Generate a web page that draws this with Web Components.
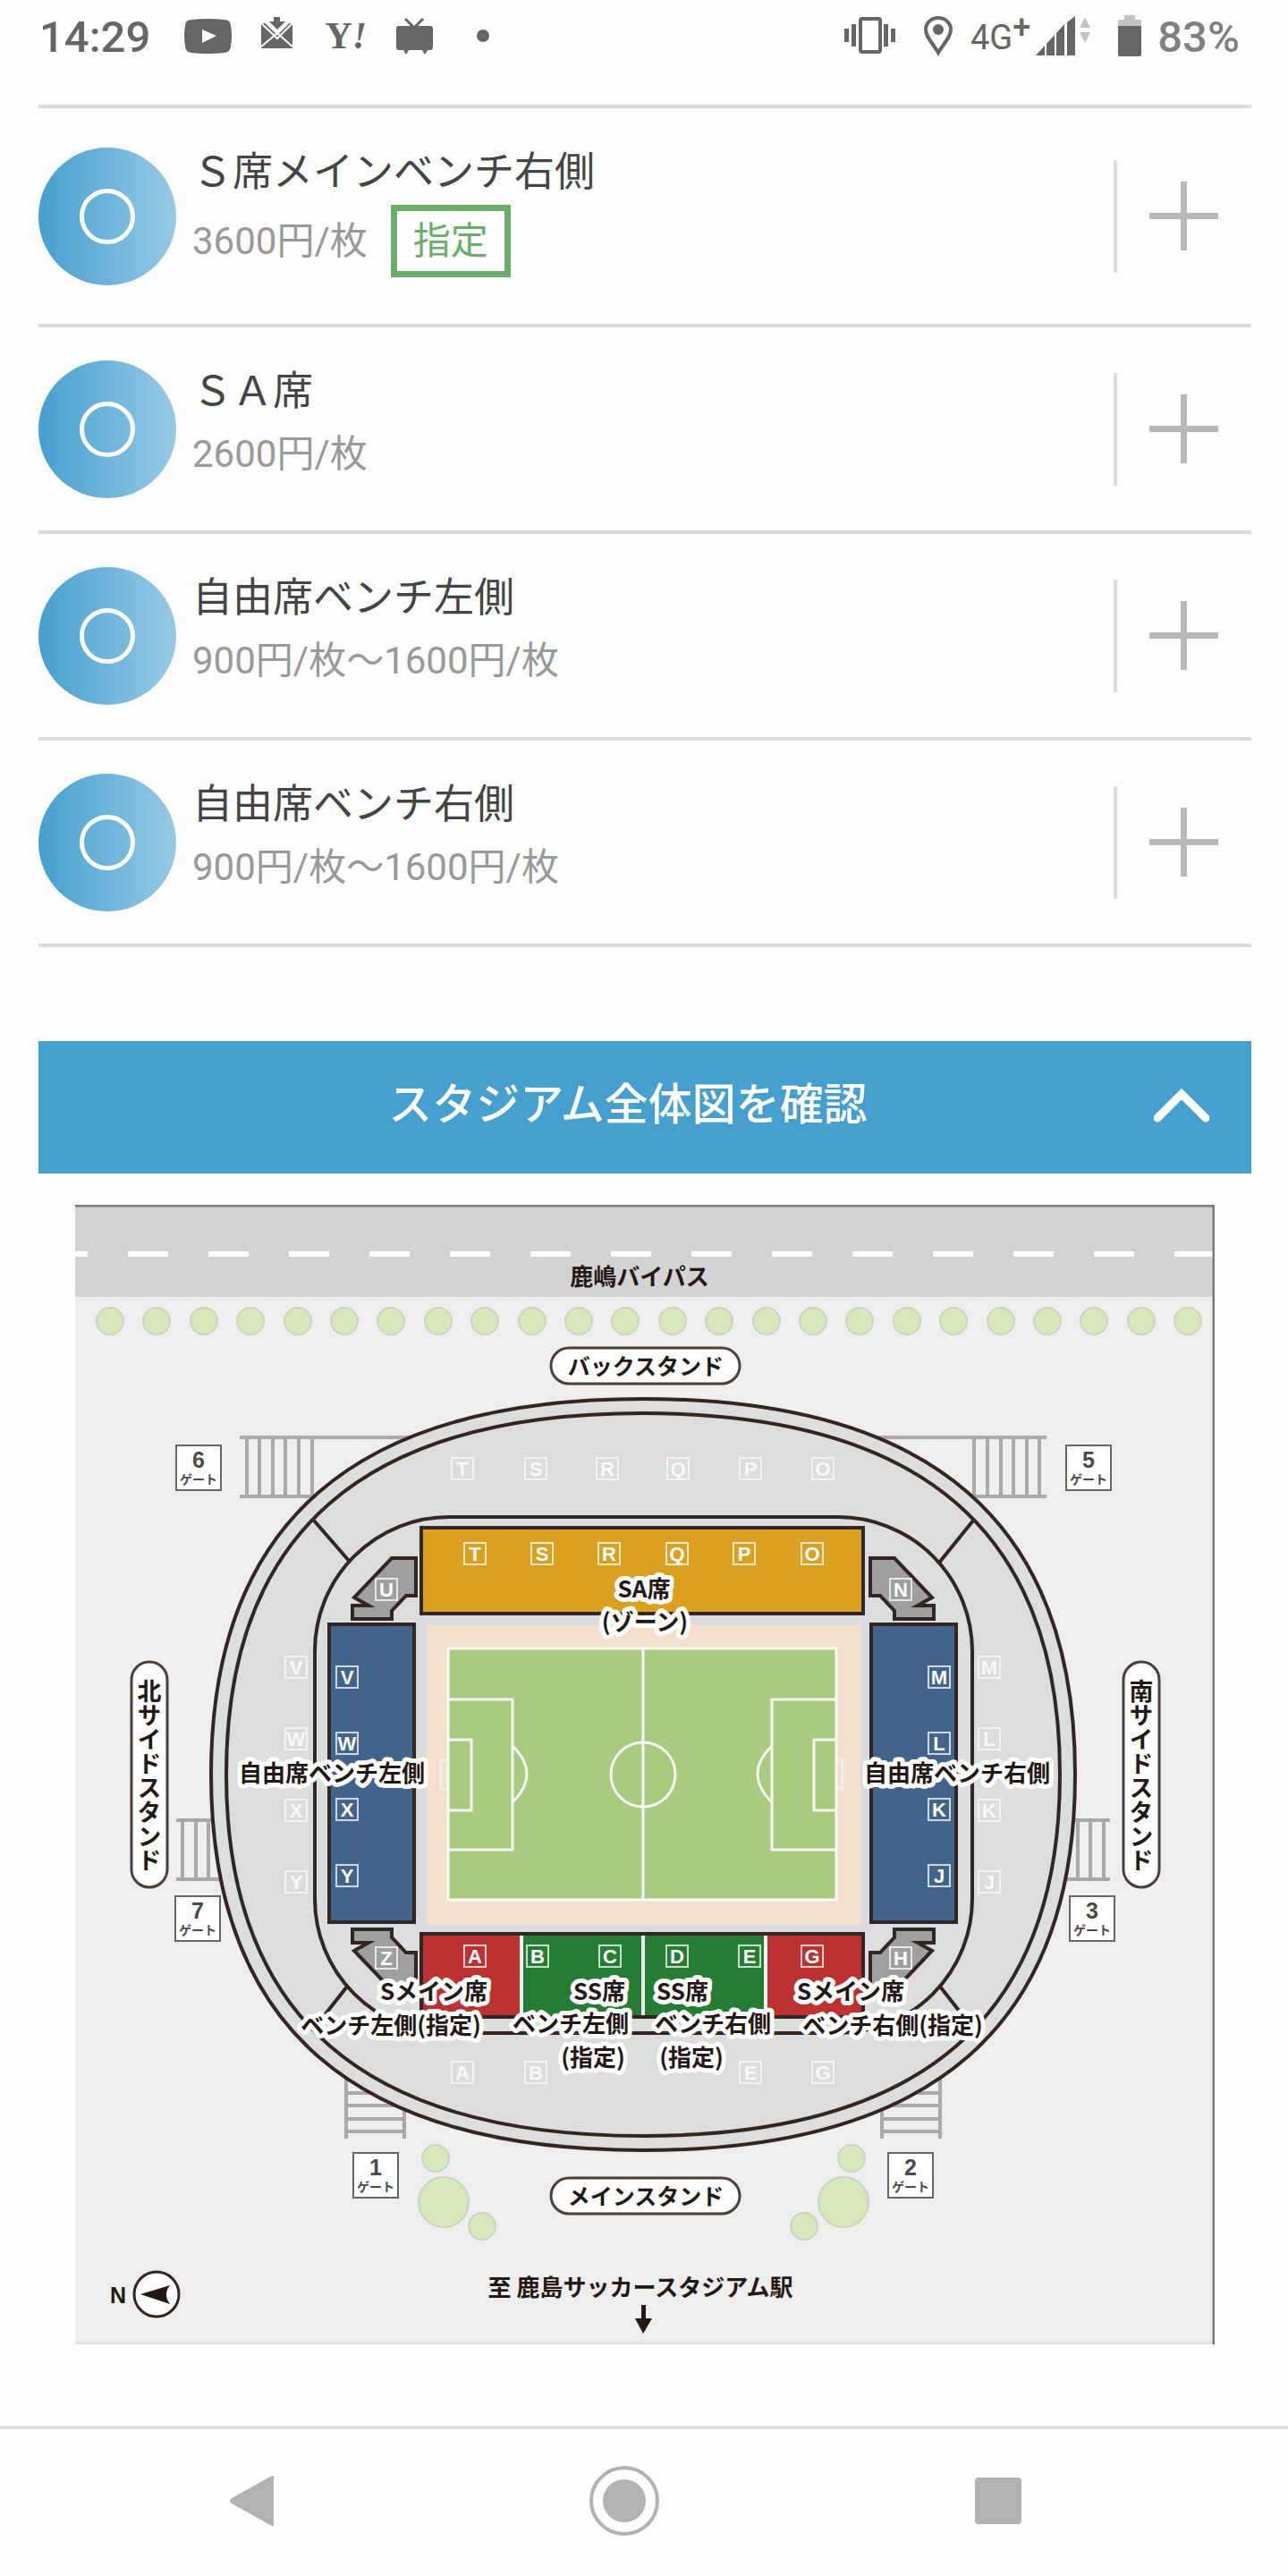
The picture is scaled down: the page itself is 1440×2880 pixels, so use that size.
<!DOCTYPE html>
<html lang="ja">
<head>
<meta charset="utf-8">
<meta name="viewport" content="width=device-width, initial-scale=1">
<title>チケット席種選択</title>
<style>
  body {
    margin: 0;
    min-height: 100vh;
    display: flex;
    flex-direction: column;
    background: #fefefe;
    color: #444;
    font-family: Roboto, "Noto Sans CJK JP", sans-serif;
  }

  main {
    flex: 1;
    padding: 0 41px 91px 43px;
  }

  seat-list {
    margin-bottom: 105px;
  }
</style>
</head>
<body>
  <status-bar time="14:29" battery="83%"></status-bar>
  <main>
    <seat-list>
      <seat-row price="3600円/枚" badge="指定">Ｓ席メインベンチ右側</seat-row>
      <seat-row price="2600円/枚">ＳＡ席</seat-row>
      <seat-row price="900円/枚〜1600円/枚">自由席ベンチ左側</seat-row>
      <seat-row price="900円/枚〜1600円/枚">自由席ベンチ右側</seat-row>
    </seat-list>
    <toggle-panel label="スタジアム全体図を確認">
      <stadium-map></stadium-map>
    </toggle-panel>
  </main>
  <nav-bar></nav-bar>

<script>
class StatusBar extends HTMLElement {
  constructor() {
    super();
    this.attachShadow({ mode: "open" });
  }

  connectedCallback() {
    this.shadowRoot.innerHTML = `
      <style>
        :host {
          display: flex;
          justify-content: space-between;
          height: 117px;
          padding: 0 54px 0 44px;
          color: #666;
          font-size: 49px;
          font-weight: 500;
          line-height: 84px;
        }

        svg { display: block; height: 82px; fill: #666; }
        .group { display: flex; gap: 24px; height: 82px; }
        .group--right { gap: 20px; }
        .time { margin-right: 14px; }
        .app { width: 53px; text-align: center; }
        .yahoo { font: bold 42px/80px "Liberation Serif", serif; }
        .network, .battery { display: flex; }
        .network { font-size: 38px; font-weight: 400; }
        .network sup { font-size: 36px; font-weight: 500; line-height: 62px; vertical-align: top; }
        .network svg { margin-left: 6px; }
        .battery { gap: 18px; color: #808080; }
        .light { fill: #c3c3c3; }
      </style>
      <div class="group">
        <span class="time">${this.getAttribute("time")}</span>
        <svg width="53" viewBox="0 0 53 82" aria-hidden="true">
          <path fill-rule="evenodd" d="M8 22Q26 20 45 22Q52 22 52 29Q54 40 52 51Q52 58 45 59Q26 61 8 59Q1 58 1 51Q-1 40 1 29Q1 22 8 22ZM20 33V48L36 40Z"/>
        </svg>
        <svg width="53" viewBox="0 0 53 82" aria-hidden="true">
          <path d="M9 26h6L27 39L38 26h6V54H9Z"/>
          <path d="M14 25L27 38L40 25M8 53L27 37L45 53M9 26L27 43L44 26" fill="none" stroke="#fefefe" stroke-width="2"/>
          <path d="M23 19h7v5h6l-9 9l-9 -9h5Z"/>
        </svg>
        <span class="app yahoo">Y<i>!</i></span>
        <svg width="53" viewBox="0 0 53 82" aria-hidden="true">
          <path d="M9 29h35q3 0 3 3v21q0 3 -3 3h-3l-3 5l-3 -5H20l-3 5l-3 -5H9q-3 0 -3 -3V32q0 -3 3 -3Z"/>
          <path d="M16 21L26 31L36 21" fill="none" stroke="#666" stroke-width="3"/>
        </svg>
        <svg width="53" viewBox="0 0 53 82" aria-hidden="true"><circle cx="26" cy="40" r="7"/></svg>
      </div>
      <div class="group group--right">
        <svg width="69" viewBox="0 0 69 82" aria-hidden="true">
          <rect x="18" y="21" width="22" height="37" rx="2" fill="none" stroke="#666" stroke-width="4"/>
          <path d="M0 32h5v15H0ZM8 27h5v25H8ZM44 27h5v25h-5ZM52 32h5v15h-5Z"/>
        </svg>
        <svg width="32" viewBox="0 0 32 82" aria-hidden="true">
          <path d="M16 20C8 20 2 26 2 33C2 42 10 48 16 59C22 48 30 42 30 33C30 26 24 20 16 20Z" fill="none" stroke="#666" stroke-width="4"/>
          <circle cx="16" cy="33" r="6"/>
        </svg>
        <div class="network">
          <span>4G<sup>+</sup></span>
          <svg width="62" viewBox="0 0 62 82" aria-hidden="true">
            <path d="M0 62L10 51V62ZM12 49L21 39V62H12ZM23 37L32 27V62H23ZM35 25L44 18V62H35Z"/>
            <path class="light" d="M49 31L55 19L61 31ZM49 36L55 48L61 36Z"/>
          </svg>
        </div>
        <div class="battery">
          <svg width="36" viewBox="0 0 36 82" aria-hidden="true">
            <path class="light" d="M10 30V22h7v-5h12v5h7v8Z"/>
            <path d="M10 29h26v32q0 2 -2 2H12q-2 0 -2 -2Z"/>
          </svg>
          <span>${this.getAttribute("battery")}</span>
        </div>
      </div>
    `;
  }
}

class SeatList extends HTMLElement {
  constructor() {
    super();
    this.attachShadow({ mode: "open" });
    this.shadowRoot.innerHTML = `
      <style>
        :host { display: block; border-top: 4px solid #dcdcdc; }
      </style>
      <slot></slot>
    `;
  }
}

class SeatRow extends HTMLElement {
  constructor() {
    super();
    this.attachShadow({ mode: "open" });
  }

  connectedCallback() {
    const badge = this.getAttribute("badge");

    this.shadowRoot.innerHTML = `
      <style>
        :host {
          display: flex;
          align-items: center;
          border-bottom: 4px solid #dcdcdc;
        }

        .mark {
          display: grid;
          place-items: center;
          flex: none;
          width: 154px;
          height: 154px;
          border-radius: 50%;
          background: linear-gradient(90deg, #45a0d0, #98c9e4);
        }

        .mark::after {
          content: "";
          box-sizing: border-box;
          width: 62px;
          height: 62px;
          border: 5px solid #fff;
          border-radius: 50%;
        }

        .info { flex: 1; padding: 37px 0 52px 18px; }
        .name { margin: 0; font-size: 45px; font-weight: 400; line-height: 70px; }

        .price {
          display: flex;
          align-items: center;
          gap: 26px;
          min-height: 68px;
          color: #999;
          font-size: 42px;
          line-height: 67px;
        }

        .badge {
          margin-top: 1px;
          padding: 0 18px;
          border: 7px solid #6bad6b;
          color: #6bad6b;
        }

        .add {
          flex: none;
          width: 154px;
          height: 126px;
          padding: 0 0 0 36px;
          border: 0;
          border-left: 4px solid #dcdcdc;
          background: none;
          cursor: pointer;
        }

        .add svg { display: block; }
      </style>
      <span class="mark"></span>
      <div class="info">
        <h2 class="name"><slot></slot></h2>
        <div class="price">
          <span>${this.getAttribute("price")}</span>
          ${badge ? `<span class="badge">${badge}</span>` : ""}
        </div>
      </div>
      <button class="add" type="button" aria-label="枚数を追加">
        <svg width="77" height="77" viewBox="0 0 77 77"><path d="M35 0h7v35h35v7H42v35H35V42H0V35H35Z" fill="#b9b9b9"/></svg>
      </button>
    `;
  }
}

class TogglePanel extends HTMLElement {
  constructor() {
    super();
    this.attachShadow({ mode: "open" });
  }

  connectedCallback() {
    this.shadowRoot.innerHTML = `
      <style>
        :host { display: block; }

        button {
          display: flex;
          align-items: center;
          width: 100%;
          height: 148px;
          padding: 0 47px 4px 71px;
          border: 0;
          background: #45a0d0;
          color: #fff;
          font: inherit;
          font-size: 49px;
          font-weight: 500;
          line-height: 70px;
          cursor: pointer;
        }

        .label { flex: 1; }
        button[aria-expanded="false"] svg { transform: rotate(180deg); }
        .content { padding: 35px 41px 0; }
      </style>
      <button type="button" aria-expanded="true" aria-controls="content">
        <span class="label">${this.getAttribute("label")}</span>
        <svg width="62" height="44" viewBox="0 0 62 44" aria-hidden="true">
          <path d="M4 36L31 9L58 36" fill="none" stroke="#fff" stroke-width="9" stroke-linecap="round"/>
        </svg>
      </button>
      <div class="content" id="content"><slot></slot></div>
    `;

    const button = this.shadowRoot.querySelector("button");
    const content = this.shadowRoot.getElementById("content");
    button.addEventListener("click", () => {
      content.hidden = !content.hidden;
      button.setAttribute("aria-expanded", String(!content.hidden));
    });
  }
}

// [letter, x, y] of the block signs, upper tier (pale) and lower tier
const OUTER_BLOCKS = [
  ["T", 433, 295], ["S", 515, 295], ["R", 595, 295], ["Q", 674, 295], ["P", 755, 295], ["O", 836, 295],
  ["V", 247, 517], ["W", 247, 597], ["X", 247, 677], ["Y", 247, 757],
  ["M", 1022, 517], ["L", 1022, 597], ["K", 1022, 677], ["J", 1022, 757],
  ["A", 433, 970], ["B", 515, 970], ["E", 755, 970], ["G", 836, 970],
];

const INNER_BLOCKS = [
  ["T", 447, 390], ["S", 522, 390], ["R", 597, 390], ["Q", 673, 390], ["P", 748, 390], ["O", 824, 390],
  ["U", 348, 430], ["N", 923, 430], ["Z", 348, 842], ["H", 923, 842],
  ["V", 304, 528], ["W", 304, 602], ["X", 304, 676], ["Y", 304, 750],
  ["M", 966, 528], ["L", 966, 602], ["K", 966, 676], ["J", 966, 750],
  ["A", 447, 840], ["B", 517, 840], ["C", 598, 840], ["D", 673, 840], ["E", 754, 840], ["G", 824, 840],
];

const AREA_LABELS = [
  ["SA席", 636, 429], ["(ゾーン)", 637, 466],
  ["自由席ベンチ左側", 287, 635], ["自由席ベンチ右側", 986, 635],
  ["Sメイン席", 401, 879], ["ベンチ左側(指定)", 353, 917],
  ["SS席", 586, 879], ["ベンチ左側", 554, 915], ["(指定)", 579, 953],
  ["SS席", 679, 879], ["ベンチ右側", 713, 915], ["(指定)", 689, 953],
  ["Sメイン席", 867, 879], ["ベンチ右側(指定)", 914, 917],
];

const GATES = [
  [6, 138, 294], [5, 1133, 294], [7, 137, 798], [3, 1137, 798], [1, 336, 1085], [2, 934, 1085],
];

class StadiumMap extends HTMLElement {
  constructor() {
    super();
    this.attachShadow({ mode: "open" });
  }

  connectedCallback() {
    this.shadowRoot.innerHTML = `
      <style>
        :host { display: block; }
        svg { display: block; width: 100%; height: auto; }
        text { font-family: "Noto Sans CJK JP", sans-serif; font-size: 26px; font-weight: 700; text-anchor: middle; fill: #231815; }
        .halo { stroke: #fff; stroke-width: 10px; stroke-linejoin: round; paint-order: stroke; }
        .line { fill: none; stroke: #312623; stroke-width: 4px; }
        .line--thin { stroke-width: 3px; }
        .ring { fill: #dcdddd; }
        .pill { fill: #fff; stroke: #4a403d; stroke-width: 3px; }
        .small { font-size: 25px; }
        .vertical { writing-mode: vertical-rl; font-size: 27px; }
        .block rect { fill: none; stroke: #fff; stroke-width: 2px; stroke-opacity: .75; }
        .block text { font: bold 22px "Liberation Sans", sans-serif; fill: #fff; }
        .outer { opacity: .85; }
        .gate rect { fill: #fff; stroke: #666; stroke-width: 2px; }
        .gate text { fill: #4c4948; font-size: 14px; }
        .gate .number { font: bold 25px "Liberation Sans", sans-serif; }
        .stairs { fill: none; stroke: #a9a9a9; stroke-width: 4px; }
        .tree { fill: #d6e7b8; stroke: #cdd3c4; stroke-width: 2px; }
        .pitch { fill: none; stroke: #f7faf3; stroke-width: 3px; }
        .compass { font: bold 25px "Liberation Sans", sans-serif; }
      </style>
      <svg viewBox="0 0 1274 1274" role="img" aria-label="スタジアム全体図">
        <defs>
          <path id="corner" d="M354 395H381V437H370L354 454V463H310V448H328L312 439Z" fill="#9e9f9f" stroke="#312623" stroke-width="4"/>
          <g id="side">
            <path class="stairs" d="M184 260H400M184 326H300M192 260V326M206 260V326M221 260V326M235 260V326M250 260V326M265 260V326"/>
            <path class="stairs" d="M113 688H200M113 754H200M120 688V754M135 688V754M149 688V754"/>
            <path class="stairs" d="M303 950V1044M368 950V1044M303 978H368M303 993H368M303 1007H368M303 1022H368M303 1036H368"/>
          </g>
        </defs>
        <rect width="1274" height="1274" fill="#eee"/>
        <rect width="1274" height="103" fill="#d3d3d4"/>
        <path d="M-31 55H1274" stroke="#fff" stroke-width="6" stroke-dasharray="45 45"/>
        ${this.roadTrees()}
        ${this.label("鹿嶋バイパス", 631, 80)}

        <use href="#side"/>
        <use href="#side" transform="translate(1270 0) scale(-1 1)"/>
        <path class="line ring" d="${this.oval(483, 420)}"/>
        <path class="line" d="${this.oval(466, 404)}"/>
        <rect class="line" x="268" y="349" width="735" height="577" rx="150"/>
        <path class="line" d="M267 353L307 399M1004 353L966 400M304 874L267 921M967 874L1004 921"/>

        ${OUTER_BLOCKS.map((b) => this.block(b, "block outer")).join("")}

        <rect x="380" y="457" width="510" height="356" fill="#dadbe0"/>
        <rect x="393" y="470" width="485" height="335" fill="#f4dfcd"/>
        <rect x="417" y="496" width="434" height="281" fill="#a8cb80"/>
        <path class="pitch" d="M417 496H851V777H417ZM635 496V777M417 553H489V721H417M417 598H443V677H417M851 553H779V721H851M851 598H826V677H851M489 605Q521 636 489 668M779 605Q747 636 779 668"/>
        <path class="pitch" opacity=".6" d="M417 621H409V653H417M851 621H858V653H851"/>
        <circle class="pitch" cx="635" cy="637" r="36"/>

        <rect class="line" x="387" y="361" width="494" height="96" style="fill: #dca021"/>
        <rect class="line" x="284" y="469" width="95" height="333" style="fill: #41648b"/>
        <rect class="line" x="890" y="469" width="95" height="333" style="fill: #41648b"/>
        <use href="#corner"/>
        <use href="#corner" transform="translate(1270 0) scale(-1 1)"/>
        <use href="#corner" transform="translate(0 1273) scale(1 -1)"/>
        <use href="#corner" transform="translate(1270 1273) scale(-1 -1)"/>
        <rect x="387" y="815" width="494" height="93" fill="#bc3231"/>
        <rect x="499" y="815" width="273" height="93" fill="#247d33"/>
        <path d="M499 815V908M635 815V908M772 815V908" stroke="#f4f4f4" stroke-width="4"/>
        <rect class="line" x="387" y="815" width="494" height="93"/>

        ${INNER_BLOCKS.map((b) => this.block(b, "block")).join("")}
        ${AREA_LABELS.map(([t, x, y]) => this.label(t, x, y, "halo")).join("")}

        <rect class="pill" x="532" y="160" width="211" height="40" rx="20"/>
        ${this.label("バックスタンド", 638, 180, "small")}
        <rect class="pill" x="532" y="1088" width="211" height="40" rx="20"/>
        ${this.label("メインスタンド", 638, 1108, "small")}
        <rect class="pill" x="63" y="511" width="40" height="252" rx="20"/>
        <text class="vertical" x="83" y="638">北サイドスタンド</text>
        <rect class="pill" x="1172" y="511" width="40" height="252" rx="20"/>
        <text class="vertical" x="1192" y="638">南サイドスタンド</text>

        ${GATES.map((g) => this.gate(g)).join("")}

        <circle class="tree" cx="403" cy="1066" r="15"/>
        <circle class="tree" cx="412" cy="1115" r="28"/>
        <circle class="tree" cx="455" cy="1142" r="15"/>
        <circle class="tree" cx="868" cy="1066" r="15"/>
        <circle class="tree" cx="859" cy="1115" r="28"/>
        <circle class="tree" cx="815" cy="1142" r="15"/>

        ${this.label("至 鹿島サッカースタジアム駅", 632, 1210)}
        <path d="M633 1230h5v15h7L635 1262L626 1245h7Z" fill="#231815"/>
        <text class="compass" x="48" y="1228">N</text>
        <circle class="line line--thin" cx="91" cy="1218" r="25" style="fill: #fff"/>
        <path d="M73 1218L106 1208Q98 1218 106 1229Z" fill="#231815"/>

        <path d="M0 1273H1274" stroke="#e0e0e0" stroke-width="3"/>
        <path d="M0 1H1273V1274" fill="none" stroke="#7d7977" stroke-width="3"/>
      </svg>
    `;
  }

  // Squarish oval round the middle of the pitch
  oval(a, b) {
    const k = 0.67;
    const cx = 635;
    const cy = 637;
    return `M${cx - a} ${cy}
      C${cx - a} ${cy - k * b} ${cx - k * a} ${cy - b} ${cx} ${cy - b}
      S${cx + a} ${cy - k * b} ${cx + a} ${cy}
      S${cx + k * a} ${cy + b} ${cx} ${cy + b}
      S${cx - a} ${cy + k * b} ${cx - a} ${cy}Z`;
  }

  roadTrees() {
    let trees = "";
    for (let i = 0; i < 24; i++) {
      trees += `<circle class="tree" cx="${Math.round(39 + i * 52.4)}" cy="130" r="15"/>`;
    }
    return trees;
  }

  label(text, x, y, className = "") {
    return `<text class="${className}" x="${x}" y="${y + 10}">${text}</text>`;
  }

  block([letter, x, y], className) {
    return `<g class="${className}">
      <rect x="${x - 12}" y="${y - 12}" width="24" height="24"/>
      <text x="${x}" y="${y + 8}">${letter}</text>
    </g>`;
  }

  gate([number, x, y]) {
    return `<g class="gate">
      <rect x="${x - 25}" y="${y - 25}" width="50" height="50"/>
      <text class="number" x="${x}" y="${y}">${number}</text>
      <text x="${x}" y="${y + 18}">ゲート</text>
    </g>`;
  }
}

class NavBar extends HTMLElement {
  constructor() {
    super();
    this.attachShadow({ mode: "open" });
    this.shadowRoot.innerHTML = `
      <style>
        :host { display: block; border-top: 4px solid #e0e0e0; }

        nav {
          display: grid;
          grid-template-columns: repeat(3, 1fr);
          padding: 0 115px 4px 72px;
        }

        button {
          display: grid;
          place-items: center;
          height: 160px;
          padding: 0;
          border: 0;
          background: none;
          cursor: pointer;
        }

        svg { fill: #b2b2b2; }
      </style>
      <nav>
        <button type="button" aria-label="戻る">
          <svg width="78" height="78" viewBox="0 0 78 78"><path d="M62 11Q64 10 64 13V65Q64 68 62 67L17 42Q13 39 17 36Z"/></svg>
        </button>
        <button type="button" aria-label="ホーム">
          <svg width="78" height="78" viewBox="0 0 78 78">
            <circle cx="39" cy="39" r="24"/>
            <circle cx="39" cy="39" r="37" fill="none" stroke="#b2b2b2" stroke-width="4"/>
          </svg>
        </button>
        <button type="button" aria-label="履歴">
          <svg width="78" height="78" viewBox="0 0 78 78"><rect x="13" y="13" width="52" height="52" rx="4"/></svg>
        </button>
      </nav>
    `;
  }
}

customElements.define("status-bar", StatusBar);
customElements.define("seat-list", SeatList);
customElements.define("seat-row", SeatRow);
customElements.define("toggle-panel", TogglePanel);
customElements.define("stadium-map", StadiumMap);
customElements.define("nav-bar", NavBar);
</script>
</body>
</html>
